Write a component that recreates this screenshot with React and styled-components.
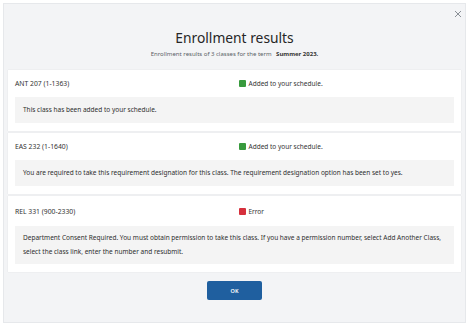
import React from 'react'
import styled, { createGlobalStyle } from 'styled-components'

const GlobalStyle = createGlobalStyle`
  html, body {
    margin: 0;
    padding: 0;
    background: #ffffff;
  }
  body {
    font-family: "Noto Sans", "Liberation Sans", Arial, sans-serif;
    color: #2b2b2b;
  }
`

const Page = styled.div`
  width: 474px;
  height: 330px;
  padding: 3px 8px 8px 3px;
  box-sizing: border-box;
`

const Modal = styled.div`
  position: relative;
  width: 463px;
  height: 320px;
  box-sizing: border-box;
  background: #f3f4f6;
  border: 1px solid #e6e8eb;
  padding: 0 4px 0 4px;
  display: flex;
  flex-direction: column;
`

const Close = styled.button`
  position: absolute;
  top: 5px;
  right: 2px;
  border: none;
  background: transparent;
  padding: 0;
  width: 10px;
  height: 10px;
  cursor: pointer;
  display: flex;
`

const Header = styled.div`
  display: flex;
  flex-direction: column;
  align-items: center;
  padding-top: 25px;
  height: 66px;
  box-sizing: border-box;
`

const Title = styled.h1`
  margin: 0;
  font-size: 13.8px;
  font-weight: 400;
  color: #262626;
  line-height: 18px;
`

const Subtitle = styled.p`
  margin: 3px 0 0;
  font-size: 6px;
  line-height: 8px;
  color: #5a5f66;

  strong {
    font-weight: 700;
    color: #333;
    margin-left: 3px;
  }
`

const List = styled.div`
  display: flex;
  flex-direction: column;
  gap: 2px;
`

const Card = styled.div`
  background: #ffffff;
  box-shadow: 0 0 1px rgba(0, 0, 0, 0.12);
  padding: 0 7px 8px 7px;
`

const Row = styled.div`
  display: grid;
  grid-template-columns: 224px 1fr;
  align-items: center;
  height: ${(p) => p.$h || 27}px;
  font-size: 6.8px;
  color: #333;
`

const Status = styled.span`
  display: flex;
  align-items: center;
  gap: 2.5px;
  font-size: 6.5px;
`

const Dot = styled.span`
  width: 7px;
  height: 7px;
  border-radius: 1px;
  background: ${(p) => (p.$error ? '#d6303c' : '#389a3d')};
`

const Message = styled.div`
  background: #f4f4f4;
  padding: ${(p) => (p.$tall ? '5px 8px' : '0 8px')};
  min-height: 26px;
  box-sizing: border-box;
  display: flex;
  align-items: center;
  font-size: 6.5px;
  line-height: 14px;
  color: #2f2f2f;
`

const Footer = styled.div`
  display: flex;
  justify-content: center;
  padding-top: 9px;
`

const OkButton = styled.button`
  width: 55px;
  height: 19px;
  border: none;
  border-radius: 2px;
  background: #1f5f9f;
  color: #ffffff;
  font-family: inherit;
  font-size: 5.5px;
  font-weight: 600;
  cursor: pointer;
`

const results = [
  {
    course: 'ANT 207 (1-1363)',
    status: 'Added to your schedule.',
    message: 'This class has been added to your schedule.',
  },
  {
    course: 'EAS 232 (1-1640)',
    status: 'Added to your schedule.',
    message:
      'You are required to take this requirement designation for this class. The requirement designation option has been set to yes.',
  },
  {
    course: 'REL 331 (900-2330)',
    status: 'Error',
    error: true,
    tall: true,
    message:
      'Department Consent Required. You must obtain permission to take this class. If you have a permission number, select Add Another Class, select the class link, enter the number and resubmit.',
  },
]

const App = () => {
  return (
    <Page>
      <GlobalStyle />
      <Modal>
        <Close aria-label="Close">
          <svg width="10" height="10" viewBox="0 0 10 10">
            <path d="M2 2 L8 8 M8 2 L2 8" stroke="#8a8f96" strokeWidth="1" />
          </svg>
        </Close>
        <Header>
          <Title>Enrollment results</Title>
          <Subtitle>
            Enrollment results of 3 classes for the term <strong>Summer 2023.</strong>
          </Subtitle>
        </Header>
        <List>
          {results.map((r) => (
            <Card key={r.course}>
              <Row $h={r.tall ? 30 : 27}>
                <span>{r.course}</span>
                <Status>
                  <Dot $error={r.error} />
                  {r.status}
                </Status>
              </Row>
              <Message $tall={r.tall}>
                <span>{r.message}</span>
              </Message>
            </Card>
          ))}
        </List>
        <Footer>
          <OkButton>OK</OkButton>
        </Footer>
      </Modal>
    </Page>
  )
}

export default App
